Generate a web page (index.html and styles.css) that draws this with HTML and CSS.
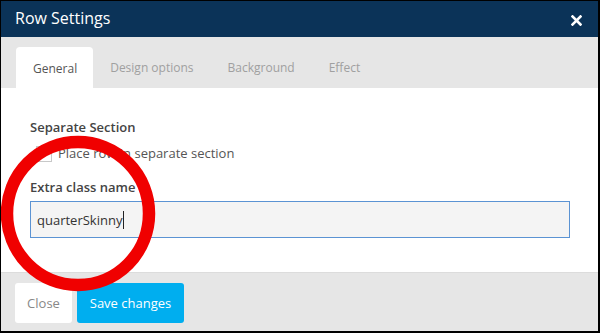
FILE: index.html
```html
<!DOCTYPE html>
<html lang="en">
<head>
    <meta charset="UTF-8">
    <title>Row Settings</title>
    <link rel="stylesheet" href="styles.css">
</head>
<body>
<div class="modal">
    <div class="modal-header">
        <span class="modal-title">Row Settings</span>
        <button class="close-x" aria-label="Close">
            <svg width="11" height="11" viewBox="0 0 11 11"><path d="M1.5 1.5 L9.5 9.5 M9.5 1.5 L1.5 9.5" stroke="#fff" stroke-width="2.6" stroke-linecap="square"/></svg>
        </button>
    </div>

    <!-- tabs -->
    <div class="tabs">
        <div class="tab active">General</div>
        <div class="tab">Design options</div>
        <div class="tab">Background</div>
        <div class="tab">Effect</div>
    </div>

    <div class="modal-body">
        <div class="field-label">Separate Section</div>
        <label class="check-row">
            <span class="checkbox"></span>
            <span>Place row in separate section</span>
        </label>
        <div class="field-label second">Extra class name</div>
        <div class="text-input">quarterSkinny<span class="caret"></span></div>
    </div>

    <div class="modal-footer">
        <button class="btn btn-close">Close</button>
        <button class="btn btn-save">Save changes</button>
    </div>

    <!-- red annotation ring drawn over the dialog -->
    <svg class="annotation" width="600" height="333" viewBox="0 0 600 333">
        <ellipse cx="78" cy="213.5" rx="71" ry="71.5" fill="none" stroke="#f00000" stroke-width="12.5"/>
    </svg>
</div>
</body>
</html>
```

FILE: styles.css
```css
* {
    box-sizing: border-box;
}

body {
    margin: 0;
    font-family: "Open Sans", "Liberation Sans", sans-serif;
    background: #fff;
}

.modal {
    position: relative;
    width: 600px;
    height: 333px;
    border: 1px solid #000;
    border-right-width: 2px;
    border-bottom-width: 2px;
    display: flex;
    flex-direction: column;
    overflow: hidden;
}

.modal-header {
    height: 36px;
    background-color: #0b3358;
    display: flex;
    align-items: center;
    justify-content: space-between;
    padding: 0 12px 0 14px;
}

.modal-title {
    color: #fff;
    font-size: 16px;
    margin-top: -2px;
}

.close-x {
    background: none;
    border: none;
    padding: 0;
    width: 20px;
    height: 20px;
    display: flex;
    align-items: center;
    justify-content: center;
    margin-top: 3px;
}

.tabs {
    height: 51px;
    background-color: #e6e6e6;
    display: flex;
    align-items: flex-end;
    padding-left: 15px;
}

.tab {
    height: 41px;
    padding: 0 17px;
    display: flex;
    align-items: center;
    font-size: 12px;
    color: #a0a0a0;
}

.tab.active {
    background: #fff;
    color: #555;
    border-radius: 4px 4px 0 0;
    padding: 2px 16px 0 17px;
}

.modal-body {
    flex: 1;
    background: #fff;
    padding: 30px 28px 0 29px;
}

.field-label {
    font-size: 13px;
    font-weight: 600;
    color: #444;
    line-height: 18px;
}

.field-label.second {
    margin-top: 16px;
}

.check-row {
    display: flex;
    align-items: center;
    gap: 6px;
    margin-top: 7px;
    font-size: 13px;
    color: #555;
    line-height: 18px;
}

.checkbox {
    width: 16px;
    height: 16px;
    border: 1px solid #c8c8c8;
    background: #fff;
    margin-left: 6px;
    margin-top: 3px;
}

.text-input {
    margin-top: 5px;
    height: 37px;
    background: #f4f4f4;
    border: 1px solid #5b93d3;
    font-size: 13px;
    color: #333;
    padding: 9px 0 0 6px;
    line-height: 18px;
    display: flex;
    align-items: flex-start;
}

.caret {
    display: inline-block;
    width: 1px;
    height: 18px;
    background: #222;
    margin-left: 1px;
}

.modal-footer {
    height: 59px;
    background-color: #e6e6e6;
    display: flex;
    gap: 5px;
    padding: 10px 14px 0;
    border-top: 1px solid #dcdcdc;
}

.btn {
    height: 40px;
    border: none;
    border-radius: 3px;
    font-family: "Open Sans", "Liberation Sans", sans-serif;
    font-size: 13px;
    padding: 0 12px;
}

.btn-close {
    background: #fff;
    color: #888;
    width: 57px;
}

.btn-save {
    background: #00aeef;
    color: #fff;
    width: 107px;
}

.annotation {
    position: absolute;
    left: -1px;
    top: -1px;
    pointer-events: none;
}
```
